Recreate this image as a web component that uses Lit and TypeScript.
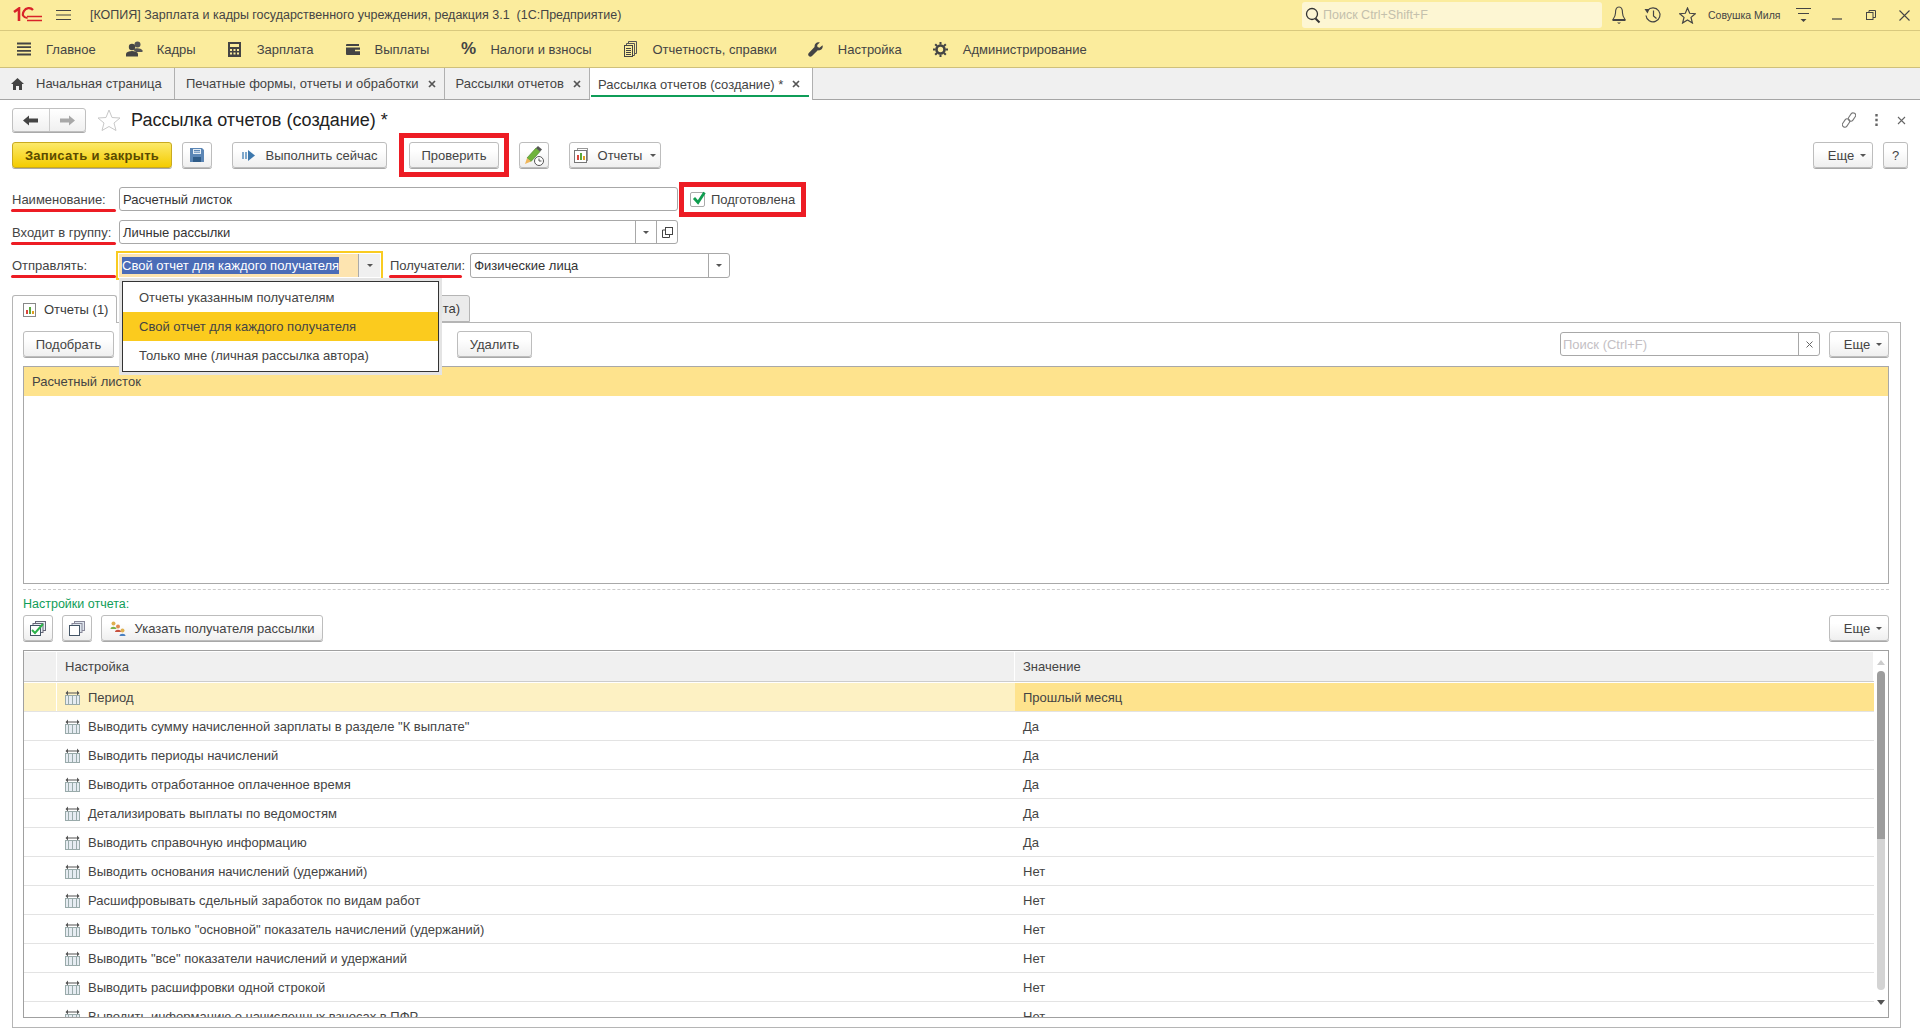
import { LitElement, css, html, svg } from 'lit';
import { customElement } from 'lit/decorators.js';

const icon = (w: number, h: number, body: unknown) =>
  html`<svg class="ico" width=${w} height=${h} viewBox="0 0 ${w} ${h}">${body}</svg>`;

const LOGO = icon(30, 16, svg`
  <path d="M1 5 L6 1.5 V14" fill="none" stroke="#d8232a" stroke-width="2.6"/>
  <path d="M20 3 A5.5 5.5 0 0 0 11 4 Q9.5 6 10 8.5 A5.5 5.5 0 0 0 14.5 11" fill="none" stroke="#d8232a" stroke-width="2.2"/>
  <path d="M14 9.5 H29 M14 13.5 H29" stroke="#d8232a" stroke-width="1.6"/>
  <path d="M15 6 H20" stroke="#d8232a" stroke-width="0"/>`);

const BURGER = icon(15, 12, svg`<path d="M0 1.5H15M0 6H15M0 10.5H15" stroke="#444" stroke-width="1.2"/>`);
const BELL = icon(16, 20, svg`<path d="M8 2 C5 2 4.5 5 4.5 8 C4.5 11 3.5 12.5 2 14.5 H14 C12.5 12.5 11.5 11 11.5 8 C11.5 5 11 2 8 2Z" fill="none" stroke="#444" stroke-width="1.1"/><path d="M1.500 15.500H14.500" stroke="#444"/><path d="M6 17.500H10L8 19Z" fill="#444"/>`);
const HISTORY = icon(18, 18, svg`<path d="M3.500 4.500 A7 7 0 1 1 2 9.500" fill="none" stroke="#444" stroke-width="1.2"/><path d="M0.500 3 L5.500 3 L3.500 7.500Z" fill="#444"/><path d="M9.500 4.500V10L12.500 12.500" fill="none" stroke="#444" stroke-width="1.2"/>`);
const starPath = 'M8.500 1 L10.700 6.300 L16.300 6.700 L12 10.400 L13.400 16 L8.500 13 L3.600 16 L5 10.400 L0.700 6.700 L6.300 6.300 Z';
const STAR = icon(17, 17, svg`<path d=${starPath} fill="none" stroke="#444" stroke-width="1.2"/>`);
const LINES = icon(15, 16, svg`<path d="M0 1.500H15M2 6.500H13" stroke="#444" stroke-width="1.1"/><path d="M4.500 12H10.500L7.500 15Z" fill="#444"/>`);
const MIN = icon(10, 10, svg`<path d="M0 9H10" stroke="#444" stroke-width="1.2"/>`);
const RESTORE = icon(10, 10, svg`<rect x="0.500" y="2.500" width="6.500" height="7" fill="none" stroke="#444"/><path d="M3 2.500V0.500H9.500V7.500H7" fill="none" stroke="#444"/>`);
const CLOSE = icon(11, 11, svg`<path d="M0.500 0.500L10.500 10.500M10.500 0.500L0.500 10.500" stroke="#444" stroke-width="1.1"/>`);
const SEARCH = icon(16, 17, svg`<circle cx="7" cy="7" r="5.500" fill="none" stroke="#333" stroke-width="1.3"/><path d="M10.500 11.500L14.500 15.500" stroke="#333" stroke-width="2"/>`);

const MENU_ICONS = [
  icon(14, 14, svg`<path d="M0 1.500H14M0 5.200H14M0 8.800H14M0 12.500H14" stroke="#444" stroke-width="1.8"/>`),
  icon(17, 16, svg`<circle cx="11.500" cy="3.500" r="3" fill="#555"/><path d="M7.500 9 C8 6.500 15 6.500 16.500 9.500 V11 H10Z" fill="#555"/><circle cx="6" cy="6" r="3.200" fill="#444"/><path d="M0 15.500 V12.500 C1 9 11 9 12 12.500 V15.500Z" fill="#444"/>`),
  icon(13, 15, svg`<path fill-rule="evenodd" fill="#444" d="M0 0H13V15H0Z M2 2V5H11V2Z M2 7V9H4V7Z M5.500 7V9H7.500V7Z M9 7V9H11V7Z M2 10.500V12.500H4V10.500Z M5.500 10.500V12.500H7.500V10.500Z M9 10.500V12.500H11V10.500Z"/>`),
  icon(14, 11, svg`<path fill-rule="evenodd" fill="#444" d="M1 0H13V2H0V1Q0 0 1 0Z M0 3.500H14V11H1Q0 11 0 10Z"/><path d="M9 6.500H14" stroke="#fbec9d" stroke-width="1.500"/>`),
  html`<span class="pct">%</span>`,
  icon(13, 16, svg`<path d="M4.500 2.500V0.500H12.500V12.500H10.500M2.500 4.500V2.500H10.500V14.500H8.500" fill="none" stroke="#555"/><rect x="0.500" y="4.500" width="8" height="11" fill="#fbec9d" stroke="#444"/><path d="M2 7.500H7M2 9.500H7M2 11.500H7M2 13.500H7" stroke="#444"/>`),
  icon(15, 15, svg`<path fill="#444" d="M14.500 3.200 L11.500 5.800 L9.500 5 L9.200 3 L11.800 0.500 C9 -0.300 6.300 1.500 6.500 5 L0.800 11 C-0.300 12.200 0.200 13.400 0.800 14 C1.500 14.700 2.800 15.200 4 14 L9.800 8.300 C13.200 8.900 15.500 6.200 14.500 3.200Z"/>`),
  icon(15, 15, svg`<circle cx="7.500" cy="7.500" r="4" fill="none" stroke="#444" stroke-width="2.600"/><path d="M7.500 0V15M0 7.500H15M2.200 2.200L12.800 12.800M12.800 2.200L2.200 12.800" stroke="#444" stroke-width="2" stroke-dasharray="2.600 9.800 2.600"/>`),
];

const MENU = ['Главное', 'Кадры', 'Зарплата', 'Выплаты', 'Налоги и взносы', 'Отчетность, справки', 'Настройка', 'Администрирование'];

const HOME = icon(13, 12, svg`<path fill="#444" d="M6.500 0 L13 6 H11 V12 H8 V8 H5 V12 H2 V6 H0Z"/>`);
const TAB_X = icon(8, 8, svg`<path d="M1 1L7 7M7 1L1 7" stroke="#555" stroke-width="1.700"/>`);
const ARROW_L = icon(15, 11, svg`<path d="M0 5.500L6 0.500V3.500H15V7.500H6V10.500Z" fill="#444"/>`);
const ARROW_R = icon(15, 11, svg`<path d="M15 5.500L9 0.500V3.500H0V7.500H9V10.500Z" fill="#a8a8a8"/>`);
const STAR_BIG = icon(24, 22, svg`<path d="M12 1 L15 8.500 L23 9 L17 14 L19 21.500 L12 17.500 L5 21.500 L7 14 L1 9 L9 8.500Z" fill="#fff" stroke="#c8c8c8"/>`);
const LINK = icon(14, 16, svg`<g fill="none" stroke="#777" stroke-width="1.100"><rect x="7.500" y="0.500" width="5" height="9" rx="2.500" transform="rotate(35 10 5)"/><rect x="1.500" y="6.500" width="5" height="9" rx="2.500" transform="rotate(35 4 11)"/></g>`);
const DOTS = icon(3, 12, svg`<path d="M1.500 0V12" stroke="#666" stroke-width="2.400" stroke-dasharray="2.400 2.400"/>`);
const SMALL_X = icon(9, 9, svg`<path d="M1 1L8 8M8 1L1 8" stroke="#666" stroke-width="1.100"/>`);
const SAVE = icon(14, 14, svg`<path d="M0 0H12L14 2V14H0Z" fill="#5b86b5"/><rect x="3" y="1" width="8" height="5" fill="#e4edf5"/><path d="M4 2.500H10M4 4.200H10" stroke="#5b86b5"/><rect x="3" y="9" width="8" height="5" fill="#2f5c88"/>`);
const RUN = icon(13, 11, svg`<path d="M0 2H2V9H0ZM3 2H5V9H3Z" fill="#7fa8cc"/><path d="M6 0L13 5.500L6 11Z" fill="#3d78ad"/>`);
const PEN = icon(21, 21, svg`<path d="M3 13L12 3L16 6.500L7 16.500Z" fill="#6fb33c" stroke="#4f8a2a" stroke-width="0.700"/><path d="M12 3L14 1L18 4.500L16 6.500Z" fill="#555"/><path d="M3 13L1 19L7 16.500Z" fill="#efb65b"/><circle cx="15" cy="16" r="4.500" fill="#fff" stroke="#555"/><path d="M15 13.500V16H17.500" fill="none" stroke="#555"/>`);
const REPORTS = icon(16, 15, svg`<rect x="3.500" y="0.500" width="10" height="12" fill="#fff" stroke="#999"/><rect x="0.500" y="2.500" width="12" height="12" fill="#fff" stroke="#777"/><path d="M3 12V7H5V12Z" fill="#d8453c"/><path d="M6 12V5H8V12Z" fill="#5aa83c"/><path d="M9 12V8H11V12Z" fill="#e0a020"/>`);
const REPORT_DOC = icon(13, 14, svg`<rect x="0.500" y="0.500" width="12" height="13" fill="#fff" stroke="#888"/><path d="M3 11V7H5V11Z" fill="#d8453c"/><path d="M6 11V4H8V11Z" fill="#5aa83c"/><path d="M9 11V8H11V11Z" fill="#e0a020"/>`);
const CHECK = icon(14, 14, svg`<path d="M2 7L6 11.500L12.500 1.500" fill="none" stroke="#0f9d4f" stroke-width="2.800"/>`);
const OPEN = icon(11, 11, svg`<rect x="3.500" y="0.500" width="7" height="7" fill="#fff" stroke="#444"/><path d="M3.500 3H0.500V10.500H7.500V7.500" fill="none" stroke="#444"/>`);
const CHECK_ALL = icon(16, 15, svg`<rect x="5.500" y="0.500" width="10" height="9" fill="#e8eef4" stroke="#667"/><rect x="3" y="2.500" width="10" height="9" fill="#e8eef4" stroke="#667"/><rect x="0.500" y="4.500" width="10" height="10" fill="#fff" stroke="#456"/><path d="M2 9L5 12L13 3" fill="none" stroke="#2bb34a" stroke-width="2"/>`);
const UNCHECK_ALL = icon(16, 15, svg`<rect x="5.500" y="0.500" width="10" height="9" fill="#dfe6ee" stroke="#889"/><rect x="3" y="2.500" width="10" height="9" fill="#dfe6ee" stroke="#889"/><rect x="0.500" y="4.500" width="10" height="10" fill="#fff" stroke="#456"/>`);
const PEOPLE = icon(16, 15, svg`<circle cx="3.500" cy="2.500" r="2" fill="#e0b050"/><path d="M0.500 8C0.500 5 6 5 6.500 8Z" fill="#7cb04a"/><circle cx="8" cy="5.500" r="2" fill="#e08a50"/><path d="M5 11C5 8 11 8 11 11Z" fill="#c8503c"/><circle cx="12.500" cy="9.500" r="2" fill="#e0b050"/><path d="M9.500 15C9.500 12 15.500 12 15.500 15Z" fill="#4a80c0"/>`);
const COLS = icon(15, 15, svg`<path d="M0.500 3L3 0.500V2.500H12V0.500L14.500 3L12 5.500V3.500H3V5.500Z" fill="#555"/><rect x="0.500" y="5.500" width="14" height="9" fill="#e6ecf2" stroke="#9aa"/><path d="M3.500 5.500V14.500M7.500 5.500V14.500M11.500 5.500V14.500" stroke="#9aa" stroke-width="1"/>`);

const ROWS: [string, string][] = [
  ['Период', 'Прошлый месяц'],
  ['Выводить сумму начисленной зарплаты в разделе "К выплате"', 'Да'],
  ['Выводить периоды начислений', 'Да'],
  ['Выводить отработанное оплаченное время', 'Да'],
  ['Детализировать выплаты по ведомостям', 'Да'],
  ['Выводить справочную информацию', 'Да'],
  ['Выводить основания начислений (удержаний)', 'Нет'],
  ['Расшифровывать сдельный заработок по видам работ', 'Нет'],
  ['Выводить только "основной" показатель начислений (удержаний)', 'Нет'],
  ['Выводить "все" показатели начислений и удержаний', 'Нет'],
  ['Выводить расшифровки одной строкой', 'Нет'],
  ['Выводить информацию о начисленных взносах в ПФР', 'Нет'],
];

@customElement('app-root')
export class AppRoot extends LitElement {
  static styles = css`
    :host {
      display: flex;
      flex-direction: column;
      height: 1031px;
      overflow: hidden;
      font: 13px 'Liberation Sans', Arial, sans-serif;
      color: #3a3a3a;
      background: #fff;
    }
    .ico { display: block; flex: none; }

    .titlebar {
      display: flex;
      align-items: center;
      height: 30px;
      flex: none;
      background: #fbec9d;
      border-bottom: 1px solid #d9c97e;
    }
    .logo { margin-left: 13px; width: 43px; }
    .title { margin-left: 19px; white-space: pre; color: #444; font-size: 12.5px; }
    .search {
      display: flex;
      align-items: center;
      gap: 2px;
      width: 300px;
      height: 26px;
      margin-left: auto;
      padding-left: 3px;
      box-sizing: border-box;
      background: #fdf6d3;
      border-radius: 3px;
      color: #c4c0ac;
      font-size: 12.5px;
    }
    .sys { display: flex; align-items: center; justify-content: center; width: 34px; height: 30px; flex: none; }
    .sys.end { width: 32px; }
    .user { width: 74px; margin: 0 4px; font-size: 10.5px; color: #444; white-space: nowrap; }

    .menu {
      display: flex;
      align-items: center;
      gap: 31px;
      height: 36px;
      flex: none;
      padding-left: 16px;
      background: #fbec9d;
      border-bottom: 1px solid #cfc07a;
      color: #444;
    }
    .menu-item { display: flex; align-items: center; gap: 14px; white-space: nowrap; }
    .menu-ico { display: flex; justify-content: center; align-items: center; width: 16px; }
    .pct { font-size: 17px; font-weight: bold; }

    .tabs {
      display: flex;
      height: 31px;
      flex: none;
      background: #f0f0f0;
      border-bottom: 1px solid #a5a5a5;
    }
    .tab {
      display: flex;
      align-items: center;
      gap: 9px;
      padding: 0 8px 0 11px;
      border-right: 1px solid #b0b0b0;
      color: #444;
      white-space: nowrap;
    }
    .tab.home { gap: 12px; width: 175px; box-sizing: border-box; }
    .tab.active {
      position: relative;
      padding: 0 12px 0 8px;
      background: #fff;
      margin-bottom: -1px;
      box-shadow: inset 0 -4px 0 #fff, inset 0 -2px 0 #fff;
    }
    .tab.active::after {
      content: '';
      position: absolute;
      left: 1px;
      right: 3px;
      bottom: 3px;
      height: 2px;
      background: #0f9d58;
    }

    .head { display: flex; align-items: center; height: 24px; flex: none; margin-top: 8px; padding: 0 12px; }
    .nav {
      display: flex;
      width: 74px;
      height: 24px;
      box-sizing: border-box;
      border: 1px solid #c0c0c0;
      border-radius: 3px;
      box-shadow: 0 1px 0 #aaa;
      background: linear-gradient(#fff, #f0f0f0);
    }
    .nav > span { display: flex; flex: 1; align-items: center; justify-content: center; }
    .nav > span + span { border-left: 1px solid #ccc; }
    .star { margin-left: 11px; }
    h1 { margin: 0 0 0 10px; font-size: 18px; font-weight: normal; color: #222; white-space: nowrap; }
    .head-end { display: flex; align-items: center; margin-left: auto; margin-right: 2px; }
    .head-end .ico { margin-left: 19px; }

    .toolbar { display: flex; height: 26px; flex: none; gap: 10px; margin-top: 10px; padding: 0 12px; }
    .btn {
      display: flex;
      align-items: center;
      justify-content: center;
      gap: 11px;
      height: 26px;
      box-sizing: border-box;
      flex: none;
      border: 1px solid #bdbdbd;
      border-radius: 3px;
      background: linear-gradient(#fff 30%, #efefef);
      box-shadow: 0 1px 0 #a8a8a8;
      color: #444;
      white-space: nowrap;
    }
    .btn.primary {
      width: 160px;
      background: linear-gradient(#fce96a, #f4cc00);
      border-color: #c9aa20;
      font-weight: bold;
      color: #5a4a00;
      letter-spacing: 0.3px;
    }
    .btn.icon { width: 30px; }
    .btn.more { width: 60px; gap: 6px; padding-left: 8px; }
    .btn.help { width: 25px; }
    .btn.run { width: 155px; }
    .btn.check { width: 90px; }
    .btn.reports { width: 92px; gap: 8px; }
    .btn.pick { width: 91px; }
    .btn.del { width: 75px; margin-left: 334px; }
    .btn.recipient { width: 222px; gap: 9px; }
    .gap-right { margin-right: 10px; }
    .push { margin-left: auto; }
    .caret { width: 0; height: 0; border: 3px solid transparent; border-top: 3px solid #555; border-bottom: 0; flex: none; }

    .form { display: flex; flex-direction: column; flex: none; margin-top: 19px; padding-left: 12px; }
    .row { display: flex; align-items: center; height: 24px; margin-bottom: 9px; }
    .row.last { height: 25px; margin-bottom: 0; }
    .label { position: relative; width: 107px; flex: none; white-space: nowrap; color: #444; }
    .label.inner { width: auto; margin: 0 5px 0 7px; }
    .mark::after {
      content: '';
      position: absolute;
      left: -1px;
      right: 3px;
      bottom: -5px;
      height: 3px;
      border-radius: 2px;
      background: #ed1c24;
    }
    .field {
      display: flex;
      align-items: stretch;
      height: 24px;
      box-sizing: border-box;
      border: 1px solid #a8a8a8;
      border-radius: 3px;
      background: #fff;
      color: #333;
    }
    .field.w559 { width: 559px; }
    .field.w260 { width: 260px; height: 25px; }
    .value { display: flex; align-items: center; flex: 1; padding-left: 3px; overflow: hidden; white-space: nowrap; }
    .cell { display: flex; align-items: center; justify-content: center; width: 20px; flex: none; border-left: 1px solid #a8a8a8; }
    .check {
      position: relative;
      display: flex;
      align-items: center;
      gap: 6px;
      margin-left: 12px;
      color: #444;
      white-space: nowrap;
    }
    .box { display: flex; width: 15px; height: 15px; box-sizing: border-box; border: 1px solid #aaa; border-radius: 2px; align-items: center; justify-content: center; }
    .box .ico { flex: none; margin: -2px -2px 0 0; }
    .check::after {
      content: '';
      position: absolute;
      top: -10px;
      bottom: -10px;
      left: -11px;
      right: -11px;
      border: 5px solid #ed1c24;
    }

    .select { position: relative; display: flex; height: 29px; width: 267px; margin-left: -3px; box-sizing: border-box; border: 2px solid #f9cb21; padding: 1px; flex: none; }
    .select-in { display: flex; flex: 1; background: #fde4b0; }
    .select-in .value { padding-left: 3px; }
    .picked { background: #4b6cb7; color: #fff; padding: 1px 0; }
    .select-in .cell { width: 21px; background: #f0f0f0; border-left-color: #aaa; }
    .popup {
      position: absolute;
      z-index: 2;
      top: 28px;
      left: 4px;
      width: 317px;
      box-sizing: border-box;
      padding: 1px 0;
      background: #fff;
      border: 1px solid #333;
      box-shadow: 0 0 0 3px #e4e4e4;
    }
    .popup div { height: 29px; line-height: 29px; padding-left: 16px; color: #444; white-space: nowrap; }
    .popup .on { background: #fbcb1e; }

    .page-tabs { display: flex; gap: 4px; margin-top: 17px; height: 28px; flex: none; padding-left: 12px; position: relative; z-index: 1; }
    .page-tab {
      display: flex;
      align-items: center;
      gap: 8px;
      box-sizing: border-box;
      height: 28px;
      padding-left: 10px;
      border: 1px solid #b5b5b5;
      border-radius: 3px 3px 0 0;
      background: #fff;
      border-bottom: 0;
      width: 105px;
    }
    .page-tab.off { width: 349px; height: 27px; background: #ebebeb; justify-content: flex-end; padding-right: 9px; border-bottom: 1px solid #b5b5b5; }

    .panel {
      display: flex;
      flex-direction: column;
      flex: 1;
      min-height: 0;
      margin: -1px 19px 3px 12px;
      padding: 8px 11px 9px 10px;
      border: 1px solid #b5b5b5;
    }
    .bar { display: flex; align-items: center; height: 26px; flex: none; gap: 9px; }
    .find { width: 260px; color: #c4c0c4; margin-right: 0; }
    .find .value { padding-left: 2px; }
    .list { height: 218px; flex: none; margin-top: 9px; box-sizing: border-box; border: 1px solid #a8a8a8; }
    .list-row { height: 29px; line-height: 29px; padding-left: 8px; background: #fee38d; color: #444; }
    .split { height: 0; flex: none; margin-top: 5px; border-top: 1px dashed #ccc; }
    .caption { height: 14px; line-height: 14px; flex: none; margin-top: 7px; color: #0f9d58; font-size: 12.500px; }
    .bar.second { margin-top: 4px; }

    .table { display: flex; flex: 1; min-height: 0; margin-top: 9px; border: 1px solid #a0a0a0; overflow: hidden; }
    .grid { flex: 1; min-width: 0; overflow: hidden; padding-top: 1px; }
    .tr { display: grid; grid-template-columns: 33px 958px 1fr; height: 28px; border-bottom: 1px solid #e3e3e3; }
    .tr > div { display: flex; align-items: center; min-width: 0; white-space: nowrap; color: #444; }
    .tr .name { gap: 8px; padding-left: 8px; }
    .tr .val { padding-left: 8px; }
    .tr.header { height: 29px; border-bottom: 1px solid #ccc; margin-bottom: 1px; }
    .tr.header > div { background: #f0f0f0; border-right: 1px solid #fff; }
    .tr.header .name { padding-left: 8px; }
    .tr.sel > div { background: #fdf1c3; }
    .tr.sel .start { border-right: 1px solid #fff; }
    .tr.sel .val { background: #fee38d; }
    .scroll { display: flex; flex-direction: column; align-items: center; width: 14px; flex: none; }
    .up { width: 0; height: 0; margin-top: 9px; border: 4px solid transparent; border-bottom: 5px solid #ccc; border-top: 0; }
    .thumb { width: 8px; height: 168px; margin-top: 6px; border-radius: 4px 4px 0 0; background: #9d9d9d; flex: none; }
    .rail { width: 8px; height: 151px; border-radius: 0 0 4px 4px; background: #d4d4d4; flex: none; }
    .down { width: 0; height: 0; margin-top: 10px; border: 4px solid transparent; border-top: 5px solid #555; border-bottom: 0; }
  `;

  private _top() {
    return html`
      <div class="titlebar">
        <div class="logo">${LOGO}</div>
        ${BURGER}
        <div class="title">[КОПИЯ] Зарплата и кадры государственного учреждения, редакция 3.1  (1С:Предприятие)</div>
        <div class="search">${SEARCH}<span>Поиск Ctrl+Shift+F</span></div>
        <div class="sys">${BELL}</div>
        <div class="sys">${HISTORY}</div>
        <div class="sys">${STAR}</div>
        <div class="user">Совушка Миля</div>
        <div class="sys">${LINES}</div>
        <div class="sys">${MIN}</div>
        <div class="sys">${RESTORE}</div>
        <div class="sys end">${CLOSE}</div>
      </div>
      <div class="menu">
        ${MENU.map((m, i) => html`
          <div class="menu-item"><span class="menu-ico">${MENU_ICONS[i]}</span>${m}</div>`)}
      </div>
      <div class="tabs">
        <div class="tab home">${HOME}Начальная страница</div>
        <div class="tab">Печатные формы, отчеты и обработки${TAB_X}</div>
        <div class="tab">Рассылки отчетов${TAB_X}</div>
        <div class="tab active">Рассылка отчетов (создание) *${TAB_X}</div>
      </div>`;
  }

  private _form() {
    return html`
      <div class="head">
        <div class="nav"><span>${ARROW_L}</span><span>${ARROW_R}</span></div>
        <div class="star">${STAR_BIG}</div>
        <h1>Рассылка отчетов (создание) *</h1>
        <div class="head-end">${LINK}${DOTS}${SMALL_X}</div>
      </div>
      <div class="toolbar">
        <div class="btn primary">Записать и закрыть</div>
        <div class="btn icon gap-right">${SAVE}</div>
        <div class="btn run">${RUN}Выполнить сейчас</div>
        <div class="btn check gap-right">Проверить</div>
        <div class="btn icon gap-right">${PEN}</div>
        <div class="btn reports">${REPORTS}Отчеты<span class="caret"></span></div>
        <div class="btn more push">Еще<span class="caret"></span></div>
        <div class="btn help">?</div>
      </div>
      <div class="form">
        <div class="row">
          <div class="label mark">Наименование:</div>
          <div class="field w559"><div class="value">Расчетный листок</div></div>
          <div class="check"><span class="box">${CHECK}</span>Подготовлена</div>
        </div>
        <div class="row">
          <div class="label mark">Входит в группу:</div>
          <div class="field w559">
            <div class="value">Личные рассылки</div>
            <div class="cell"><span class="caret"></span></div>
            <div class="cell">${OPEN}</div>
          </div>
        </div>
        <div class="row last">
          <div class="label mark">Отправлять:</div>
          <div class="select">
            <div class="select-in">
              <div class="value"><span class="picked">Свой отчет для каждого получателя</span></div>
              <div class="cell"><span class="caret"></span></div>
            </div>
            <div class="popup">
              <div>Отчеты указанным получателям</div>
              <div class="on">Свой отчет для каждого получателя</div>
              <div>Только мне (личная рассылка автора)</div>
            </div>
          </div>
          <div class="label inner mark">Получатели:</div>
          <div class="field w260">
            <div class="value">Физические лица</div>
            <div class="cell"><span class="caret"></span></div>
          </div>
        </div>
      </div>`;
  }

  private _panel() {
    return html`
      <div class="page-tabs">
        <div class="page-tab">${REPORT_DOC}Отчеты (1)</div>
        <div class="page-tab off">Доставка (электронная почта)</div>
      </div>
      <div class="panel">
        <div class="bar">
          <div class="btn pick">Подобрать</div>
          <div class="btn del">Удалить</div>
          <div class="field find push">
            <div class="value">Поиск (Ctrl+F)</div>
            <div class="cell">${icon(7, 7, svg`<path d="M0.500 0.500L6.500 6.500M6.500 0.500L0.500 6.500" stroke="#666"/>`)}</div>
          </div>
          <div class="btn more">Еще<span class="caret"></span></div>
        </div>
        <div class="list"><div class="list-row">Расчетный листок</div></div>
        <div class="split"></div>
        <div class="caption">Настройки отчета:</div>
        <div class="bar second">
          <div class="btn icon">${CHECK_ALL}</div>
          <div class="btn icon">${UNCHECK_ALL}</div>
          <div class="btn recipient">${PEOPLE}Указать получателя рассылки</div>
          <div class="btn more push">Еще<span class="caret"></span></div>
        </div>
        <div class="table">
          <div class="grid">
            <div class="tr header"><div></div><div class="name">Настройка</div><div class="val">Значение</div></div>
            ${ROWS.map(([name, val], i) => html`
              <div class="tr ${i === 0 ? 'sel' : ''}">
                <div class="start"></div>
                <div class="name">${COLS}${name}</div>
                <div class="val">${val}</div>
              </div>`)}
          </div>
          <div class="scroll">
            <span class="up"></span>
            <span class="thumb"></span>
            <span class="rail"></span>
            <span class="down"></span>
          </div>
        </div>
      </div>`;
  }

  render() {
    return html`${this._top()}${this._form()}${this._panel()}`;
  }
}

declare global {
  interface HTMLElementTagNameMap {
    'app-root': AppRoot;
  }
}
